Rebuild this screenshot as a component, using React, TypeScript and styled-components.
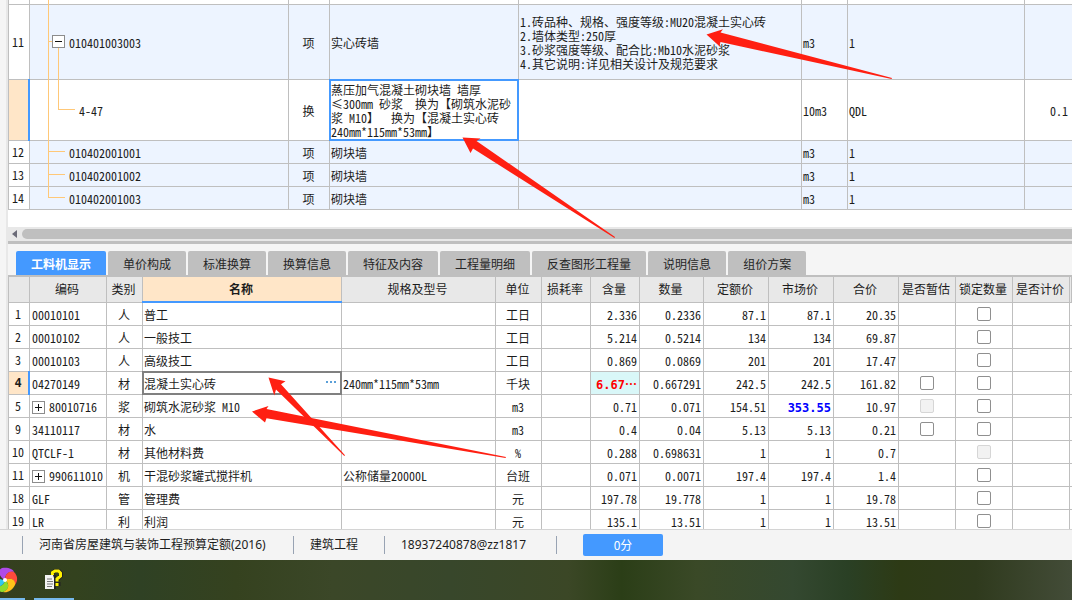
import React from 'react';
import styled, { createGlobalStyle, css } from 'styled-components';

const line = '#bfbfbf';
const blue = '#4499ff';
const peach = '#ffe6c8';
const treeLine = '#ffc878';

const GlobalStyle = createGlobalStyle`
  * { box-sizing: border-box; }
  body {
    margin: 0;
    background: #f5f5f5;
    color: #1c1c1c;
    font-family: "Noto Sans CJK SC", sans-serif;
    font-size: 12px;
  }
  button, input { font: inherit; margin: 0; }
`;

const Page = styled.div`
  position: relative;
  display: flex;
  flex-direction: column;
  height: 100vh;
  overflow: hidden;
`;

const Workspace = styled.main`
  flex: 1;
  min-height: 0;
  display: flex;
  flex-direction: column;
  margin-left: 6px;
  border-left: 2px solid #e8e8e8;
  overflow: hidden;
`;

const Table = styled.table`
  width: 100%;
  table-layout: fixed;
  border-collapse: separate;
  border-spacing: 0;
  border-left: 1px solid ${line};
  background: #fff;
  font-feature-settings: "hwid" 1;
  text-spacing-trim: space-all;
`;

type Align = 'left' | 'center' | 'right';

const Cell = styled.td<{ $align?: Align; $edge?: boolean }>`
  position: relative;
  padding: 2px ${p => (p.$edge ? 4 : 2)}px 0 1px;
  border-right: ${p => (p.$edge ? '0' : `1px solid ${line}`)};
  border-bottom: 1px solid ${line};
  line-height: 14px;
  text-align: ${p => p.$align ?? 'left'};
  vertical-align: middle;
  white-space: pre;
`;

const NumberCell = styled(Cell)<{ $current?: boolean }>`
  padding: 0 2px 0 0;
  text-align: center;
  ${p => p.$current && css`
    background: ${peach};
    font-family: "DejaVu Sans Mono", monospace;
    font-weight: 700;
    &::after {
      content: "";
      position: absolute;
      top: -1px;
      right: -1px;
      bottom: -1px;
      width: 2px;
      background: ${blue};
    }
  `}
`;

const FocusCell = styled(Cell)<{ $tone: string }>`
  &::after {
    content: "";
    position: absolute;
    inset: -1px;
    border: 2px solid ${p => p.$tone};
    pointer-events: none;
  }
`;

/* ---------- upper bill-of-quantities grid ---------- */

const BillRow = styled.tr<{ $height: number; $tinted?: boolean }>`
  height: ${p => p.$height}px;
  background: ${p => (p.$tinted ? '#edf4ff' : '#fff')};
  & > ${NumberCell} { background: ${p => (p.$tinted ? '#fff' : undefined)}; }
`;

const BillPane = styled.section`
  background: #fff;
  padding-bottom: 17px;
`;

const TreeCell = styled(Cell)<{ $depth: number }>`
  padding-left: ${p => 39 + p.$depth * 10}px;
`;

const Trunk = styled.i<{ $last?: boolean }>`
  position: absolute;
  left: 18px;
  top: 0;
  bottom: ${p => (p.$last ? '50%' : '-1px')};
  width: 1px;
  background: ${treeLine};
`;

const Branch = styled.i<{ $child?: boolean }>`
  position: absolute;
  left: ${p => (p.$child ? 28 : 18)}px;
  top: ${p => (p.$child ? '-32px' : '0')};
  bottom: 50%;
  width: 17px;
  border-bottom: 1px solid ${treeLine};
  border-left: ${p => (p.$child ? `1px solid ${treeLine}` : '0')};
`;

const ToggleButton = styled.button`
  display: inline-flex;
  align-items: center;
  justify-content: center;
  width: 13px;
  height: 13px;
  padding: 0;
  border: 1px solid #8c8c8c;
  background: #fff;
`;

const NodeToggle = styled(ToggleButton)`
  position: absolute;
  left: 22px;
  top: 50%;
  margin-top: -7px;
`;

function Sign({ plus }: { plus?: boolean }) {
  return (
    <svg width="7" height="7" viewBox="0 0 7 7" shapeRendering="crispEdges" aria-hidden="true">
      <path d={plus ? 'M0 3.5H7M3.5 0V7' : 'M0 3.5H7'} stroke="#111" fill="none" />
    </svg>
  );
}

interface Bill {
  no: string;
  code: string;
  kind: string;
  name: string;
  feature?: string;
  unit: string;
  expr: string;
  qty?: string;
  height: number;
  child?: boolean;
  open?: boolean;
  last?: boolean;
}

const bills: Bill[] = [
  {
    no: '11', code: '010401003003', kind: '项', name: '实心砖墙', unit: 'm3', expr: '1', height: 75, open: true,
    feature: '1.砖品种、规格、强度等级:MU20混凝土实心砖\n2.墙体类型:250厚\n3.砂浆强度等级、配合比:Mb10水泥砂浆\n4.其它说明:详见相关设计及规范要求',
  },
  {
    no: '', code: '4-47', kind: '换', unit: '10m3', expr: 'QDL', qty: '0.1', height: 61, child: true,
    name: '蒸压加气混凝土砌块墙 墙厚\n≤300mm 砂浆  换为【砌筑水泥砂\n浆 M10】  换为【混凝土实心砖\n240mm*115mm*53mm】',
  },
  { no: '12', code: '010402001001', kind: '项', name: '砌块墙', unit: 'm3', expr: '1', height: 23 },
  { no: '13', code: '010402001002', kind: '项', name: '砌块墙', unit: 'm3', expr: '1', height: 23 },
  { no: '14', code: '010402001003', kind: '项', name: '砌块墙', unit: 'm3', expr: '1', height: 23, last: true },
];

function BillGrid() {
  return (
    <BillPane>
      <Table>
        <colgroup>
          <col width="21" /><col width="259" /><col width="41" /><col width="189" />
          <col /><col width="46" /><col width="177" /><col width="47" />
        </colgroup>
        <tbody>
          <BillRow $height={5}>
            <NumberCell />
            <TreeCell $depth={0}><Trunk /></TreeCell>
            <Cell /><Cell /><Cell /><Cell /><Cell /><Cell $edge />
          </BillRow>
          {bills.map(b => (
            <BillRow key={b.code} $height={b.height} $tinted={!b.child}>
              <NumberCell $current={b.child}>{b.no}</NumberCell>
              <TreeCell $depth={b.child ? 1 : 0}>
                <Trunk $last={b.last} />
                <Branch $child={b.child} />
                {b.open && <NodeToggle aria-label="折叠"><Sign /></NodeToggle>}
                {b.code}
              </TreeCell>
              <Cell $align="center">{b.kind}</Cell>
              {b.child
                ? <FocusCell $tone={blue}>{b.name}</FocusCell>
                : <Cell>{b.name}</Cell>}
              <Cell>{b.feature}</Cell>
              <Cell>{b.unit}</Cell>
              <Cell>{b.expr}</Cell>
              <Cell $align="right" $edge>{b.qty}</Cell>
            </BillRow>
          ))}
        </tbody>
      </Table>
    </BillPane>
  );
}

/* ---------- splitter with horizontal scroll bar ---------- */

const ScrollTrack = styled.div`
  display: flex;
  align-items: center;
  gap: 5px;
  height: 14px;
  padding-left: 4px;
  background: #e8e8e8;
`;

const ScrollThumb = styled.div`
  flex: 1;
  height: 10px;
  border-radius: 5px 0 0 5px;
  background: ${line};
`;

const Splitter = styled.div`
  height: 3px;
  background: ${line};
`;

/* ---------- lower detail grid ---------- */

const TabBar = styled.div`
  display: flex;
  gap: 2px;
  padding: 7px 8px 0;
  border-bottom: 2px solid ${line};
`;

const Tab = styled.button<{ $active?: boolean }>`
  height: 24px;
  padding: 0 15px;
  border: 0;
  border-radius: 2px 2px 0 0;
  background: ${p => (p.$active ? blue : line)};
  color: ${p => (p.$active ? '#fff' : '#262626')};
  font-weight: ${p => (p.$active ? 700 : 400)};
  white-space: nowrap;
`;

const DetailPane = styled.section`
  flex: 1;
  min-height: 0;
  overflow: hidden;
  background: #fff;
`;

const HeadCell = styled.th<{ $active?: boolean }>`
  height: 26px;
  padding: 0 2px 2px 0;
  border-right: 1px solid ${line};
  border-bottom: 1px solid ${line};
  background: #e8e8e8;
  font-weight: 400;
  line-height: 14px;
  white-space: nowrap;
  ${p => p.$active && css`
    position: relative;
    background: ${peach};
    font-weight: 700;
    &::after {
      content: "";
      position: absolute;
      left: -1px;
      right: -1px;
      bottom: -1px;
      height: 2px;
      background: ${blue};
    }
  `}
`;

const DetailRow = styled.tr`
  height: 23px;
`;

const CodeLine = styled.span`
  display: flex;
  align-items: center;
  gap: 4px;
  padding-left: 1px;
`;

const MoreButton = styled.button`
  position: absolute;
  right: 3px;
  top: 4px;
  display: flex;
  width: 12px;
  height: 12px;
  padding: 5px 0;
  border: 0;
  background: none;
`;

const StrongValue = styled.strong<{ $tone: string }>`
  color: ${p => p.$tone};
  font-family: "DejaVu Sans Mono", "Noto Sans CJK SC", monospace;
`;

const Ellipsis = styled.span`
  font-family: "Noto Sans CJK SC", sans-serif;
`;

const ChangedCell = styled(Cell)`
  background: #d9f7f8;
`;

const CheckCell = styled(Cell)`
  padding: 0;
  text-align: center;
  line-height: 0;
`;

const CheckBox = styled.input`
  appearance: none;
  width: 14px;
  height: 14px;
  border: 1px solid #8f8f8f;
  border-radius: 2px;
  background: #fff;
  &:checked { background: ${blue}; }
  &:disabled { border-color: #d6d6d6; background: #f2f2f2; }
`;

const tabs = ['工料机显示', '单价构成', '标准换算', '换算信息', '特征及内容', '工程量明细', '反查图形工程量', '说明信息', '组价方案'];

const heads = ['', '编码', '类别', '名称', '规格及型号', '单位', '损耗率', '含量', '数量', '定额价', '市场价', '合价', '是否暂估', '锁定数量', '是否计价', ''];
const widths = [21, 77, 36, 199, undefined, 46, 49, 49, 64, 65, 65, 65, 57, 57, 57, 2];

type Check = 'on' | 'off' | undefined;

interface Item {
  no: string;
  code: string;
  kind: string;
  name: string;
  spec?: string;
  unit: string;
  nums: [string, string, string, string, string];
  estimate?: Check;
  lock: Check;
  group?: boolean;
  current?: boolean;
  repriced?: boolean;
}

const items: Item[] = [
  { no: '1', code: '00010101', kind: '人', name: '普工', unit: '工日', nums: ['2.336', '0.2336', '87.1', '87.1', '20.35'], lock: 'on' },
  { no: '2', code: '00010102', kind: '人', name: '一般技工', unit: '工日', nums: ['5.214', '0.5214', '134', '134', '69.87'], lock: 'on' },
  { no: '3', code: '00010103', kind: '人', name: '高级技工', unit: '工日', nums: ['0.869', '0.0869', '201', '201', '17.47'], lock: 'on' },
  { no: '4', code: '04270149', kind: '材', name: '混凝土实心砖', spec: '240mm*115mm*53mm', unit: '千块', nums: ['6.67', '0.667291', '242.5', '242.5', '161.82'], estimate: 'on', lock: 'on', current: true },
  { no: '5', code: '80010716', kind: '浆', name: '砌筑水泥砂浆 M10', unit: 'm3', nums: ['0.71', '0.071', '154.51', '353.55', '10.97'], estimate: 'off', lock: 'on', group: true, repriced: true },
  { no: '9', code: '34110117', kind: '材', name: '水', unit: 'm3', nums: ['0.4', '0.04', '5.13', '5.13', '0.21'], estimate: 'on', lock: 'on' },
  { no: '10', code: 'QTCLF-1', kind: '材', name: '其他材料费', unit: '%', nums: ['0.288', '0.698631', '1', '1', '0.7'], lock: 'off' },
  { no: '11', code: '990611010', kind: '机', name: '干混砂浆罐式搅拌机', spec: '公称储量20000L', unit: '台班', nums: ['0.071', '0.0071', '197.4', '197.4', '1.4'], lock: 'on', group: true },
  { no: '18', code: 'GLF', kind: '管', name: '管理费', unit: '元', nums: ['197.78', '19.778', '1', '1', '19.78'], lock: 'on' },
  { no: '19', code: 'LR', kind: '利', name: '利润', unit: '元', nums: ['135.1', '13.51', '1', '1', '13.51'], lock: 'on' },
];

function Tick({ state, label }: { state: Check; label: string }) {
  return (
    <CheckCell>
      {state && <CheckBox type="checkbox" aria-label={label} disabled={state === 'off'} />}
    </CheckCell>
  );
}

function DetailGrid() {
  return (
    <DetailPane>
      <Table>
        <colgroup>{widths.map((w, i) => <col key={i} width={w} />)}</colgroup>
        <thead>
          <tr>
            {heads.map((h, i) => <HeadCell key={i} scope="col" $active={h === '名称'}>{h}</HeadCell>)}
          </tr>
        </thead>
        <tbody>
          {items.map(it => {
            const [content, qty, quota, market, total] = it.nums;
            return (
              <DetailRow key={it.code}>
                <NumberCell $current={it.current}>{it.no}</NumberCell>
                <Cell>
                  <CodeLine>
                    {it.group && <ToggleButton aria-label="展开"><Sign plus /></ToggleButton>}
                    {it.code}
                  </CodeLine>
                </Cell>
                <Cell $align="center">{it.kind}</Cell>
                {it.current ? (
                  <FocusCell $tone="#808080">
                    {it.name}
                    <MoreButton aria-label="更多">
                      <svg width="12" height="2" viewBox="0 0 12 2" aria-hidden="true">
                        <path d="M0 0h2v2H0zM4 0h2v2H4zM8 0h2v2H8z" fill="#5a9fd8" />
                      </svg>
                    </MoreButton>
                  </FocusCell>
                ) : <Cell>{it.name}</Cell>}
                <Cell>{it.spec}</Cell>
                <Cell $align="center">{it.unit}</Cell>
                <Cell />
                {it.current ? (
                  <ChangedCell $align="right">
                    <StrongValue $tone="#f00">{content}<Ellipsis>…</Ellipsis></StrongValue>
                  </ChangedCell>
                ) : <Cell $align="right">{content}</Cell>}
                <Cell $align="right">{qty}</Cell>
                <Cell $align="right">{quota}</Cell>
                <Cell $align="right">
                  {it.repriced ? <StrongValue $tone="#00f">{market}</StrongValue> : market}
                </Cell>
                <Cell $align="right">{total}</Cell>
                <Tick state={it.estimate} label={`${it.name} 是否暂估`} />
                <Tick state={it.lock} label={`${it.name} 锁定数量`} />
                <Cell />
                <CheckCell $edge />
              </DetailRow>
            );
          })}
        </tbody>
      </Table>
    </DetailPane>
  );
}

/* ---------- status bar and task bar ---------- */

const StatusBar = styled.footer`
  display: grid;
  grid-template-columns: 271px 91px 172px 27px auto;
  align-items: center;
  justify-content: start;
  height: 31px;
  padding-left: 22px;
  border-top: 1px solid #d4d4d4;
  background: #f4f4f4;
`;

const StatusItem = styled.span`
  height: 18px;
  padding-left: 16px;
  border-left: 1px solid #98a3b3;
  font-family: "Noto Sans", "Noto Sans CJK SC", sans-serif;
  line-height: 18px;
  white-space: nowrap;
`;

const ScoreButton = styled.button`
  width: 80px;
  height: 22px;
  padding: 0;
  border: 0;
  border-radius: 2px;
  background: ${blue};
  color: #fff;
  line-height: 20px;
`;

const TaskBar = styled.nav`
  display: flex;
  gap: 9px;
  height: 40px;
  background: linear-gradient(90deg,
    #353f1f 0%, #33421e 7%, #2f4124 13%, #35421f 22%, #3b4728 31%, #38472b 42%,
    #3b4726 53%, #2b3e17 58%, #3a4927 65%, #344830 74%, #2a4025 79%,
    #2d3a15 84%, #2f3a1d 91%, #434c38 100%);
`;

const TaskButton = styled.button<{ $width: number }>`
  display: flex;
  align-items: center;
  justify-content: ${p => (p.$width < 40 ? 'flex-start' : 'center')};
  width: ${p => p.$width}px;
  padding: 2px 0 0;
  border: 0;
  border-bottom: 2px solid #76b9ed;
  background: none;
`;

function Pinwheel() {
  return (
    <svg width="18" height="26" viewBox="0 0 18 26" aria-hidden="true">
      <path d="M5 13C-1 10 -3 3 2 1C8 0 13 2 14 5C9 4 5 7 5 13Z" fill="#b04be8" />
      <path d="M5 13C5 7 9 3 14 5C18 9 18 14 15 18C15 13 11 10 5 13Z" fill="#ff4a3d" />
      <path d="M5 13C11 10 16 13 15 18C12 24 7 26 3 25C9 22 10 17 5 13Z" fill="#ffc21a" />
      <path d="M5 13C10 17 9 23 3 25C-1 25 -5 22 -6 19C0 21 4 18 5 13Z" fill="#8fdc2c" />
      <path d="M5 13C4 18 0 21 -6 19V6C-4 10 0 13 5 13Z" fill="#33c7ee" />
      <circle cx="5" cy="13" r="2" fill="#fff" />
    </svg>
  );
}

function HelpDocument() {
  return (
    <svg width="18" height="22" viewBox="0 0 18 22" aria-hidden="true">
      <path d="M1 6h10v14H1z" fill="#222" />
      <path d="M0 6h8l1 3v11H0z" fill="#f4f4f4" />
      <path d="M2 10h5M2 12.500h6M2 15h6M2 17.500h5" stroke="#777" />
      <path d="M8 6V3.500L10 2h4l2 2v3l-3 3v2M11.500 15h4" fill="none" stroke="#222" strokeWidth="4" />
      <path d="M7.500 6V3.500L10 2h3.500l2 2v3l-3.500 3v2.500" fill="none" stroke="#fff200" strokeWidth="3" />
      <path d="M10.500 14h3v3h-3z" fill="#fff200" />
    </svg>
  );
}

/* ---------- red annotation arrows lying over the page ---------- */

const Annotations = styled.svg`
  position: absolute;
  left: 0;
  top: 0;
  pointer-events: none;
`;

export default function App() {
  return (
    <Page lang="zh-CN">
      <GlobalStyle />
      <Workspace>
        <BillGrid />
        <ScrollTrack>
          <svg width="5" height="8" viewBox="0 0 5 8" aria-hidden="true">
            <path d="M5 0V8L0 4Z" fill="#6b6b78" />
          </svg>
          <ScrollThumb />
        </ScrollTrack>
        <Splitter />
        <TabBar role="tablist">
          {tabs.map((t, i) => <Tab key={t} role="tab" aria-selected={i === 0} $active={i === 0}>{t}</Tab>)}
        </TabBar>
        <DetailGrid />
      </Workspace>
      <StatusBar>
        <StatusItem>河南省房屋建筑与装饰工程预算定额(2016)</StatusItem>
        <StatusItem>建筑工程</StatusItem>
        <StatusItem>18937240878@zz1817</StatusItem>
        <StatusItem />
        <ScoreButton>0分</ScoreButton>
      </StatusBar>
      <TaskBar>
        <TaskButton $width={25} aria-label="浏览器"><Pinwheel /></TaskButton>
        <TaskButton $width={40} aria-label="帮助"><HelpDocument /></TaskButton>
      </TaskBar>
      <Annotations width="1072" height="600" viewBox="0 0 1072 600" fill="#ff1f12" aria-hidden="true">
        <path d="M706.500 34.500L723 29.300L720.500 32.600L892 78L891.500 79L720.500 42L719.500 46.300Z" />
        <path d="M462.500 137.500L480.500 138.500L476.500 141L615 237L614.500 238L473 148.500L470.500 153Z" />
        <path d="M268.500 377.500L285.500 381.300L281 384.300L345 455.300L344.300 456L276 389.500L274.300 395.500Z" />
        <path d="M252 411.500L268.500 406L266.500 409L506 457L505.500 458L266.500 418.300L265 422.500Z" />
      </Annotations>
    </Page>
  );
}
